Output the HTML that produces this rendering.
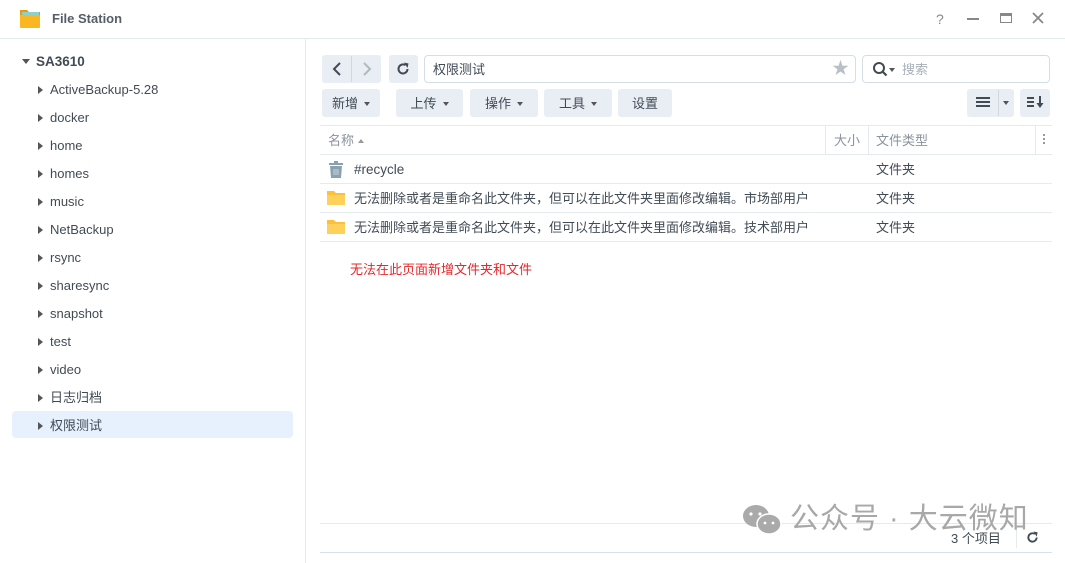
<!DOCTYPE html>
<html><head><meta charset="utf-8"><style>
*{box-sizing:border-box;margin:0;padding:0}
body{width:1065px;height:563px;overflow:hidden;background:#fff;font-family:"Liberation Sans","Noto Sans CJK SC",sans-serif;font-size:13px;line-height:18px;color:#414b55;position:relative}
.a{position:absolute}
.btn{position:absolute;background:#e9eef4;border-radius:3px;height:28px;display:flex;align-items:center;justify-content:center;color:#414b55;font-size:13px;padding-top:2px}
.car{display:inline-block;width:0;height:0;border-left:3.5px solid transparent;border-right:3.5px solid transparent;border-top:4px solid #555;margin-left:6px}
.tri{position:absolute;width:0;height:0;border-top:4px solid transparent;border-bottom:4px solid transparent;border-left:5px solid #555}
.ti{position:absolute;left:50px;font-size:13px;color:#414b55}
.hl{position:absolute;height:1px;background:#e5eaef}
</style></head><body>
<svg class="a" style="left:18px;top:6px" width="24" height="24" viewBox="0 0 24 24"><path d="M2 4h7l2 2h11v15H2z" fill="#e89a0c"/><rect x="4" y="6" width="17" height="6" fill="#8fd0c8"/><rect x="2" y="9" width="20" height="13" rx="1" fill="#fbb722"/></svg>
<div class="a" style="left:52px;top:10px;font-weight:bold;font-size:13px;color:#555e68">File Station</div>
<div class="a" style="left:936px;top:10px;color:#888;font-size:14px">?</div>
<div class="a" style="left:967px;top:18px;width:12px;height:2px;background:#888"></div>
<div class="a" style="left:1000px;top:13px;width:12px;height:10px;border:1.5px solid #888;border-top-width:3px"></div>
<svg class="a" style="left:1032px;top:12px" width="12" height="12"><path d="M1 1L11 11M11 1L1 11" stroke="#888" stroke-width="1.8"/></svg>
<div class="hl" style="left:0;top:38px;width:1065px"></div>
<div class="a" style="left:305px;top:39px;width:1px;height:524px;background:#e5eaef"></div>
<div class="a" style="left:22px;top:59px;width:0;height:0;border-left:4px solid transparent;border-right:4px solid transparent;border-top:5px solid #555"></div>
<div class="a" style="left:36px;top:53px;font-weight:bold;font-size:13.5px;color:#414b55">SA3610</div>
<div class="a" style="left:12px;top:411px;width:281px;height:27px;background:#e6f1fd;border-radius:4px"></div>
<div id="tree"></div>
<script>
var n=["ActiveBackup-5.28","docker","home","homes","music","NetBackup","rsync","sharesync","snapshot","test","video","日志归档","权限测试"],h="";
n.forEach(function(t,i){var y=81+i*28;h+='<div class="tri" style="left:38px;top:'+(y+5)+'px"></div><div class="ti" style="top:'+y+'px">'+t+'</div>';});
document.getElementById("tree").innerHTML=h;
</script>
<div class="btn" style="left:322px;top:55px;width:59px"></div>
<div class="a" style="left:351px;top:56px;width:1px;height:26px;background:#d0d7de"></div>
<svg class="a" style="left:331px;top:62px" width="12" height="14"><path d="M9 1L3 7L9 13" stroke="#414b55" stroke-width="2" fill="none"/></svg>
<svg class="a" style="left:361px;top:62px" width="12" height="14"><path d="M3 1L9 7L3 13" stroke="#b0b8c0" stroke-width="2" fill="none"/></svg>
<div class="btn" style="left:389px;top:55px;width:29px"></div>
<svg class="a" style="left:396px;top:62px" width="14" height="14" viewBox="0 0 14 14"><path d="M11.5 7A4.5 4.5 0 1 1 9.5 3.2" stroke="#414b55" stroke-width="2" fill="none"/><path d="M8 0.5L12.5 1.5L11.5 6z" fill="#414b55"/></svg>
<div class="a" style="left:424px;top:55px;width:432px;height:28px;border:1px solid #d5dde5;border-radius:4px"></div>
<div class="a" style="left:433px;top:61px;font-size:13px">权限测试</div>
<div class="a" style="left:832px;top:59px;color:#b8c0c8;font-size:17px;line-height:20px">★</div>
<div class="a" style="left:862px;top:55px;width:188px;height:28px;border:1px solid #d5dde5;border-radius:4px"></div>
<svg class="a" style="left:872px;top:61px" width="16" height="16"><circle cx="7" cy="7" r="5" stroke="#414b55" stroke-width="2" fill="none"/><path d="M10.5 10.5L14.5 14.5" stroke="#414b55" stroke-width="2.2"/></svg>
<div class="a" style="left:889px;top:68px;border-left:3px solid transparent;border-right:3px solid transparent;border-top:4px solid #555"></div>
<div class="a" style="left:902px;top:61px;color:#a8b0b8;font-size:13px">搜索</div>
<div class="btn" style="left:322px;top:89px;width:58px">新增<span class="car"></span></div>
<div class="btn" style="left:396px;top:89px;width:67px">上传<span class="car"></span></div>
<div class="btn" style="left:470px;top:89px;width:68px">操作<span class="car"></span></div>
<div class="btn" style="left:544px;top:89px;width:68px">工具<span class="car"></span></div>
<div class="btn" style="left:618px;top:89px;width:54px">设置</div>
<div class="btn" style="left:967px;top:89px;width:47px"></div>
<div class="a" style="left:998px;top:90px;width:1px;height:26px;background:#d0d7de"></div>
<div class="a" style="left:976px;top:97px;width:14px;height:2px;background:#414b55;box-shadow:0 4px 0 #414b55,0 8px 0 #414b55"></div>
<div class="a" style="left:1003px;top:101px;border-left:3px solid transparent;border-right:3px solid transparent;border-top:4px solid #555"></div>
<div class="btn" style="left:1020px;top:89px;width:30px"></div>
<div class="a" style="left:1027px;top:97px;width:7px;height:2px;background:#414b55;box-shadow:0 4px 0 #414b55,0 8px 0 #414b55"></div>
<svg class="a" style="left:1036px;top:95px" width="8" height="14"><path d="M4 1V11" stroke="#414b55" stroke-width="2"/><path d="M0.5 8L4 13L7.5 8z" fill="#414b55"/></svg>
<div class="hl" style="left:320px;top:125px;width:732px"></div>
<div class="a" style="left:328px;top:132px;color:#8a939c">名称</div>
<div class="a" style="left:358px;top:139px;border-left:3px solid transparent;border-right:3px solid transparent;border-bottom:4px solid #999"></div>
<div class="a" style="left:825px;top:126px;width:1px;height:28px;background:#e5eaef"></div>
<div class="a" style="left:834px;top:132px;color:#8a939c">大小</div>
<div class="a" style="left:868px;top:126px;width:1px;height:28px;background:#e5eaef"></div>
<div class="a" style="left:876px;top:132px;color:#8a939c">文件类型</div>
<div class="a" style="left:1035px;top:126px;width:1px;height:28px;background:#e5eaef"></div>
<div class="a" style="left:1043px;top:134px;width:2px;height:2px;background:#999;box-shadow:0 4px 0 #999,0 8px 0 #999"></div>
<div class="hl" style="left:320px;top:154px;width:732px"></div>
<svg class="a" style="left:328px;top:161px" width="16" height="17" viewBox="0 0 16 17"><rect x="1" y="2" width="14" height="2" fill="#8aa2b0"/><rect x="6" y="0" width="4" height="2" fill="#8aa2b0"/><path d="M2 5h12l-1 12H3z" fill="#8aa2b0"/><path d="M6 8v6M8 8v6M10 8v6" stroke="#c8d4dc" stroke-width="1"/></svg>
<div class="a" style="left:354px;top:161px;font-size:13.5px">#recycle</div>
<div class="a" style="left:876px;top:161px">文件夹</div>
<div class="hl" style="left:320px;top:183px;width:732px"></div>
<svg class="a" style="left:327px;top:190px" width="18" height="15"><path d="M0 1h7l2 2h9v12H0z" fill="#fbc13b"/><rect x="0" y="5" width="18" height="10" fill="#ffd05a"/></svg>
<div class="a" style="left:354px;top:190px">无法删除或者是重命名此文件夹，但可以在此文件夹里面修改编辑。市场部用户</div>
<div class="a" style="left:876px;top:190px">文件夹</div>
<div class="hl" style="left:320px;top:212px;width:732px"></div>
<svg class="a" style="left:327px;top:219px" width="18" height="15"><path d="M0 1h7l2 2h9v12H0z" fill="#fbc13b"/><rect x="0" y="5" width="18" height="10" fill="#ffd05a"/></svg>
<div class="a" style="left:354px;top:219px">无法删除或者是重命名此文件夹，但可以在此文件夹里面修改编辑。技术部用户</div>
<div class="a" style="left:876px;top:219px">文件夹</div>
<div class="hl" style="left:320px;top:241px;width:732px"></div>
<div class="a" style="left:350px;top:261px;color:#e8262a">无法在此页面新增文件夹和文件</div>
<div class="hl" style="left:320px;top:523px;width:732px"></div>
<div class="hl" style="left:320px;top:552px;width:732px;background:#d8e0e8"></div>
<div class="a" style="left:1016px;top:528px;width:1px;height:20px;background:#e5eaef"></div>
<div class="a" style="left:951px;top:530px;font-size:13px">3 个项目</div>
<svg class="a" style="left:1026px;top:531px" width="13" height="13" viewBox="0 0 14 14"><path d="M11.5 7A4.5 4.5 0 1 1 9.5 3.2" stroke="#414b55" stroke-width="2" fill="none"/><path d="M8 0.5L12.5 1.5L11.5 6z" fill="#414b55"/></svg>
<svg class="a" style="left:741px;top:503px" width="42" height="34"><ellipse cx="15" cy="13" rx="13" ry="11" fill="#aaa"/><ellipse cx="28" cy="21" rx="12" ry="10" fill="#aaa" stroke="#fff" stroke-width="1.5"/><circle cx="10" cy="11" r="1.6" fill="#fff"/><circle cx="19" cy="11" r="1.6" fill="#fff"/><circle cx="24" cy="20" r="1.4" fill="#fff"/><circle cx="32" cy="20" r="1.4" fill="#fff"/></svg>
<div class="a" style="left:790px;top:502px;font-size:29px;line-height:34px;color:#a8a8a8;letter-spacing:1px">公众号 · 大云微知</div>
</body></html>
